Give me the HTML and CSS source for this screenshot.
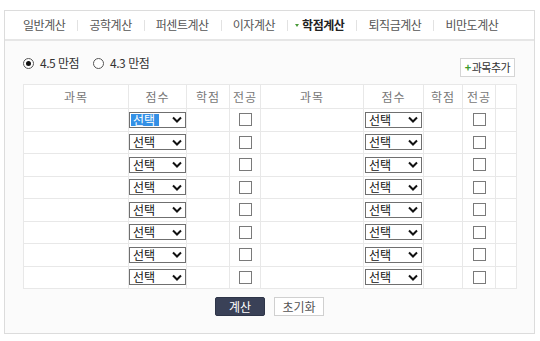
FILE: index.html
```html
<!DOCTYPE html>
<html lang="ko">
  <head>
    <meta charset="UTF-8" />
    <title>학점계산</title>
    <link rel="stylesheet" href="styles.css">
  </head>
  <body>
    <div class="calc">
      <!-- 탭 메뉴 -->
      <ul class="tabs">
        <li>일반계산</li>
        <li>공학계산</li>
        <li>퍼센트계산</li>
        <li>이자계산</li>
        <li class="on"><span class="arrow"></span>학점계산</li>
        <li>퇴직금계산</li>
        <li>비만도계산</li>
      </ul>

      <div class="body">
        <div class="toolbar">
          <label class="radio"><span class="dot checked"></span>4.5 만점</label>
          <label class="radio"><span class="dot"></span>4.3 만점</label>
          <button class="add"><span class="plus">+</span>과목추가</button>
        </div>

        <table class="grade">
          <colgroup>
            <col style="width:105px"><col style="width:58px"><col style="width:43px"><col style="width:31px">
            <col style="width:103px"><col style="width:60px"><col style="width:39px"><col style="width:33px">
            <col style="width:21px">
          </colgroup>
          <thead>
            <tr>
              <th>과목</th><th>점수</th><th>학점</th><th>전공</th>
              <th>과목</th><th>점수</th><th>학점</th><th>전공</th><th></th>
            </tr>
          </thead>
          <tbody id="rows"></tbody>
        </table>

        <div class="actions">
          <button class="run">계산</button>
          <button class="reset">초기화</button>
        </div>
      </div>
    </div>

    <script>
      // 8줄 만들기
      var rows = document.getElementById('rows')
      var chevron = '<svg width="10" height="7" viewBox="0 0 10 7"><polyline points="1,1.5 5,5.5 9,1.5" fill="none" stroke="#111" stroke-width="2"/></svg>'
      function pick(on) {
        return '<div class="pick"><span class="val' + (on ? ' on' : '') + '">선택</span>' + chevron + '</div>'
      }
      for (var i = 0; i < 8; i++) {
        var tr = document.createElement('tr')
        tr.innerHTML =
          '<td></td><td class="score">' + pick(i === 0) + '</td><td></td><td class="chk"><span class="box"></span></td>' +
          '<td></td><td class="score">' + pick(false) + '</td><td></td><td class="chk"><span class="box"></span></td><td></td>'
        rows.appendChild(tr)
      }
    </script>
  </body>
</html>
```

FILE: styles.css
```css
body {
  margin: 0;
  padding: 0;
  background-color: #fff;
  font-family: "Noto Sans CJK KR", "Noto Sans", sans-serif;
  font-size: 12px;
  color: #333;
}

.calc {
  width: 531px;
  margin: 10px 0 0 4px;
  border: 1px solid #dcdcdc;
  box-sizing: border-box;
}

.tabs {
  display: flex;
  align-items: center;
  height: 28px;
  margin: 0;
  padding: 0 0 0 6px;
  list-style: none;
  background-color: #fff;
  border-bottom: 2px solid #e6e6e6;
}

.tabs li {
  position: relative;
  padding: 0 12px;
  color: #555;
  letter-spacing: -0.45px;
  line-height: 14px;
}

.tabs li + li:before {
  content: "";
  position: absolute;
  left: 0;
  top: 2px;
  width: 1px;
  height: 11px;
  background-color: #e2e2e2;
}

.tabs li.on {
  font-weight: bold;
  color: #222;
  padding-left: 8px;
}

.tabs .arrow {
  display: inline-block;
  width: 0;
  height: 0;
  margin: 0 3px 2px 0;
  vertical-align: middle;
  border-left: 2.5px solid transparent;
  border-right: 2.5px solid transparent;
  border-top: 3px solid #4a9a3a;
}

.body {
  padding: 17px 18px 17px 18px;
  background-color: #fbfbfb;
}

.toolbar {
  display: flex;
  align-items: flex-start;
  height: 19px;
  margin-bottom: 7px;
}

.radio {
  display: flex;
  align-items: center;
  margin-top: -2px;
  margin-right: 14px;
  line-height: 14px;
  color: #333;
  letter-spacing: -0.5px;
}

.dot {
  width: 9px;
  height: 9px;
  margin-right: 6px;
  border: 1px solid #555;
  border-radius: 50%;
  background-color: #fff;
  position: relative;
}

.dot.checked:after {
  content: "";
  position: absolute;
  left: 2px;
  top: 2px;
  width: 5px;
  height: 5px;
  border-radius: 50%;
  background-color: #111;
}

.add {
  margin-left: auto;
  margin-right: 1px;
  width: 55px;
  height: 19px;
  padding: 0;
  border: 1px solid #d5d5d5;
  background-color: #fff;
  font-family: inherit;
  font-size: 11px;
  color: #333;
  letter-spacing: -0.5px;
  line-height: 17px;
}

.add .plus {
  color: #3a9a2a;
  font-weight: bold;
  margin-right: 1px;
}

.grade {
  width: 493px;
  table-layout: fixed;
  border-collapse: collapse;
  background-color: #fff;
  border: 1px solid #e3e3e3;
}

.grade th,
.grade td {
  border: 1px solid #e8e8e8;
  padding: 0;
  text-align: center;
}

.grade th {
  height: 23px;
  font-weight: normal;
  color: #777;
  letter-spacing: 1px;
}

.grade td {
  height: 21.5px;
}

.pick {
  display: flex;
  align-items: center;
  justify-content: space-between;
  width: 57px;
  height: 16px;
  margin: 0 auto;
  padding: 0 3px 0 1px;
  box-sizing: border-box;
  border: 1px solid #6f6f6f;
  background-color: #fff;
}

.pick .val {
  padding: 0 2px;
  line-height: 12px;
  font-size: 12px;
  color: #111;
  text-align: left;
}

.pick .val.on {
  width: 24px;
  background-color: #3390e6;
  color: #fff;
}

.pick svg {
  display: block;
}

.box {
  display: inline-block;
  width: 11px;
  height: 11px;
  margin-top: 3px;
  border: 1px solid #7a7a7a;
  background-color: #fff;
}

.actions {
  display: flex;
  justify-content: center;
  margin-top: 8px;
  gap: 9px;
}

.actions button {
  width: 50px;
  height: 19px;
  padding: 0;
  font-family: inherit;
  font-size: 12px;
  line-height: 17px;
}

.run {
  border: 1px solid #2e3548;
  border-radius: 2px;
  background-color: #3a4157;
  color: #fff;
}

.reset {
  border: 1px solid #d0d0d0;
  background-color: #fff;
  color: #555;
}
```
